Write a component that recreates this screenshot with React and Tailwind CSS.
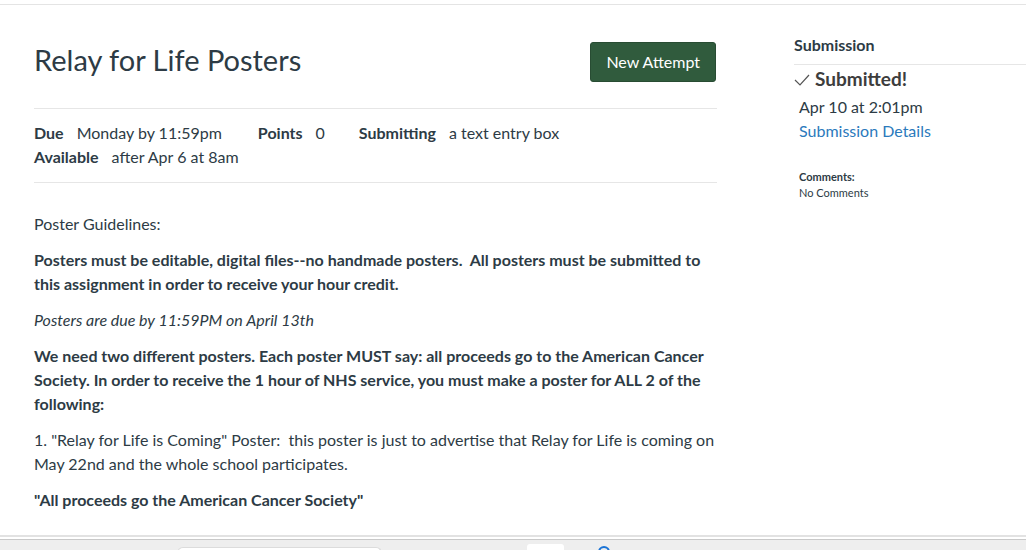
import React from "react";

const Detail = ({ label, value, className = "" }) => (
  <span className={"inline-flex items-baseline " + className}>
    <span className="font-bold text-[#2d3b45]">{label}</span>
    <span className="ml-[13px] text-[#2d3b45]">{value}</span>
  </span>
);

export default () => {
  return (
    <div className="w-[1026px] h-[550px] overflow-hidden bg-white flex flex-col font-['Lato','Liberation_Sans',sans-serif] text-[#2d3b45]">
      <div className="h-[5px] shrink-0 border-b border-[#e4e4e4]" />

      <div className="flex flex-1 min-h-0">
        {/* main column */}
        <div className="w-[683px] ml-[34px] shrink-0">
          <div className="flex items-center justify-between pt-[37px] pb-[26px] border-b border-[#e6e6e6]">
            <h1 className="text-[29px] leading-[38px] font-normal -mt-[4px]">Relay for Life Posters</h1>
            <button className="h-[40px] px-[15px] mr-[1px] rounded-[3px] bg-[#305b3d] border border-[#284c33] text-white text-[16px]">
              New Attempt
            </button>
          </div>

          <div className="pt-[12px] pb-[13px] border-b border-[#e6e6e6] text-[16px] leading-[24px]">
            <div className="flex">
              <Detail label="Due" value="Monday by 11:59pm" />
              <Detail label="Points" value="0" className="ml-[36px]" />
              <Detail label="Submitting" value="a text entry box" className="ml-[34px]" />
            </div>
            <div>
              <Detail label="Available" value="after Apr 6 at 8am" />
            </div>
          </div>

          <div className="pt-[29px] text-[16px] leading-[24px] flex flex-col gap-[12px]">
            <p>Poster Guidelines:</p>
            <p className="font-bold">
              Posters must be editable, digital files--no handmade posters.&nbsp; All posters must be submitted to this assignment in order to receive your hour credit.
            </p>
            <p className="italic">Posters are due by 11:59PM on April 13th</p>
            <p className="font-bold">
              We need two different posters. Each poster MUST say: all proceeds go to the American Cancer Society. In order to receive the 1 hour of NHS service, you must make a poster for ALL 2 of the following:
            </p>
            <p>
              1. "Relay for Life is Coming" Poster:&nbsp; this poster is just to advertise that Relay for Life is coming on May 22nd and the whole school participates.
            </p>
            <p className="font-bold">"All proceeds go the American Cancer Society"</p>
          </div>
        </div>

        {/* sidebar */}
        <div className="ml-[77px] flex-1 pt-[30px]">
          <div className="pb-[9px] border-b border-[#e6e6e6] text-[16px] leading-[20px] font-bold">Submission</div>
          <div className="mt-[1px] flex items-center text-[19px] leading-[26px] font-bold text-[#3d3d3d]">
            <svg width="16" height="12" viewBox="0 0 16 12" className="mr-[5px] mt-[1px]">
              <path d="M1 6 L6 11 L15 1" fill="none" stroke="#555" strokeWidth="1.2" />
            </svg>
            Submitted!
          </div>
          <div className="ml-[5px] mt-[3px] text-[16px] leading-[24px]">
            <div>Apr 10 at 2:01pm</div>
            <div className="text-[#2b7abc]">Submission Details</div>
          </div>
          <div className="ml-[5px] mt-[26px] text-[11px] leading-[16px]">
            <div className="font-bold">Comments:</div>
            <div>No Comments</div>
          </div>
        </div>
      </div>

      {/* browser chrome fragment */}
      <div className="h-[2px] shrink-0 bg-[#e2e2e2]" />
      <div className="h-[2px] shrink-0 bg-white" />
      <div className="h-[11px] shrink-0 bg-[#eeeeee] border-t border-[#c9c9c9] flex items-start">
        <div className="ml-[177px] mt-[7px] w-[205px] h-[8px] rounded-t-[6px] bg-white border border-[#dcdcdc] border-b-0" />
        <div className="ml-[145px] mt-[4px] w-[37px] h-[8px] rounded-t-[3px] bg-white" />
        <div className="ml-[34px] mt-[6px] w-[12px] h-[12px] rounded-full border-[2.5px] border-[#1a73d6]" />
      </div>
    </div>
  );
};
